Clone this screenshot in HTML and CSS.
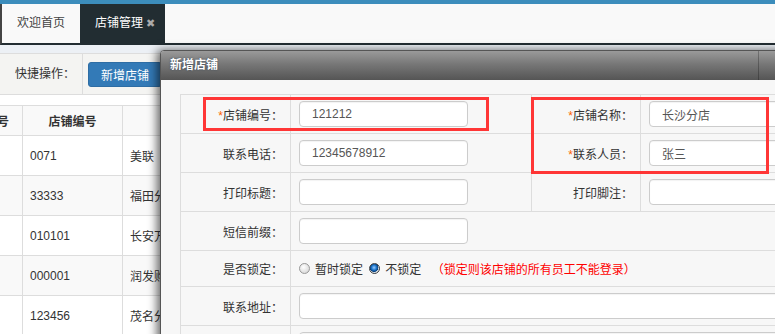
FILE: index.html
```html
<!DOCTYPE html>
<html lang="zh-CN">

<head>
    <meta charset="UTF-8">
    <meta name="viewport" content="width=device-width, initial-scale=1.0">
    <title>店铺管理</title>
    <link rel="stylesheet" href="styles.css">
</head>

<body>
    <div class="topbar"></div>
    <div class="tabs">
        <div class="tab">欢迎首页</div>
        <div class="tab active">店铺管理<span class="tab-close">✖</span></div>
    </div>

    <div class="content">
        <div class="panel">
            <div class="toolbar">
                <div class="toolbar-label">快捷操作：</div>
                <div class="toolbar-btns">
                    <button class="btn-primary">新增店铺</button>
                </div>
            </div>
            <div class="grid-wrap">
                <table class="grid">
                    <thead>
                        <tr>
                            <th class="col-no">序号</th>
                            <th class="col-code">店铺编号</th>
                            <th class="col-name">店铺名称</th>
                        </tr>
                    </thead>
                    <tbody>
                        <tr><td></td><td>0071</td><td>美联</td></tr>
                        <tr><td></td><td>33333</td><td>福田分店</td></tr>
                        <tr><td></td><td>010101</td><td>长安万达</td></tr>
                        <tr><td></td><td>000001</td><td>润发购物</td></tr>
                        <tr><td></td><td>123456</td><td>茂名分店</td></tr>
                    </tbody>
                </table>
            </div>
        </div>
    </div>

    <!-- 新增店铺 弹窗 -->
    <div class="dialog">
        <div class="dialog-head">
            <span class="dialog-title">新增店铺</span>
            <span class="dialog-tools"></span>
        </div>
        <div class="dialog-body">
            <table class="form">
                <colgroup>
                    <col class="c-label">
                    <col class="c-field">
                    <col class="c-label2">
                    <col class="c-field2">
                </colgroup>
                <tr>
                    <td class="label"><span class="req">*</span>店铺编号：</td>
                    <td><input class="input" type="text" value="121212"></td>
                    <td class="label"><span class="req">*</span>店铺名称：</td>
                    <td><input class="input" type="text" value="长沙分店"></td>
                </tr>
                <tr>
                    <td class="label">联系电话：</td>
                    <td><input class="input" type="text" value="12345678912"></td>
                    <td class="label"><span class="req">*</span>联系人员：</td>
                    <td><input class="input" type="text" value="张三"></td>
                </tr>
                <tr>
                    <td class="label">打印标题：</td>
                    <td><input class="input" type="text"></td>
                    <td class="label">打印脚注：</td>
                    <td><input class="input" type="text"></td>
                </tr>
                <tr>
                    <td class="label">短信前缀：</td>
                    <td colspan="3"><input class="input" type="text"></td>
                </tr>
                <tr class="row-radio">
                    <td class="label">是否锁定：</td>
                    <td colspan="3">
                        <label class="radio"><input type="radio" name="lock">暂时锁定</label>
                        <label class="radio"><input type="radio" name="lock" checked>不锁定</label>
                        <span class="tip">（锁定则该店铺的所有员工不能登录）</span>
                    </td>
                </tr>
                <tr>
                    <td class="label">联系地址：</td>
                    <td colspan="3"><input class="input input-wide" type="text"></td>
                </tr>
                <tr>
                    <td class="label"></td>
                    <td colspan="3"><textarea class="input input-wide area"></textarea></td>
                </tr>
            </table>
        </div>
    </div>

    <div class="mark mark-code"></div>
    <div class="mark mark-name"></div>
</body>

</html>
```

FILE: styles.css
```css
body {
    font-family: "Liberation Sans", "Noto Sans CJK SC", sans-serif;
    font-size: 12px;
    color: #333;
    margin: 0;
    padding: 0;
    width: 775px;
    height: 334px;
    overflow: hidden;
    position: relative;
    background-color: #fff;
}

.topbar {
    height: 4px;
    background-color: #3c8dbc;
}

.tabs {
    display: flex;
    height: 39px;
    background-color: #f9f9f9;
    border-left: 2px solid #444;
    border-bottom: 2px solid #222d32;
}

.tab {
    padding: 0 15px;
    line-height: 39px;
    font-size: 12px;
    color: #444;
}

.tab.active {
    background-color: #222d32;
    color: #fff;
    padding-right: 10px;
}

.tab-close {
    font-family: "DejaVu Sans", sans-serif;
    font-size: 11px;
    color: #aaa;
    margin-left: 3px;
}

.content {
    background-color: #ecf0f5;
    padding-top: 8px;
}

.panel {
    background-color: #fff;
    border-top: 1px solid #ddd;
}

.toolbar {
    display: flex;
    height: 40px;
    background-color: #f4f4f2;
    border-bottom: 1px solid #ddd;
}

.toolbar-label {
    width: 67px;
    padding-left: 15px;
    line-height: 40px;
    border-right: 1px solid #ddd;
}

.toolbar-btns {
    padding: 8px 5px;
}

.btn-primary {
    font-family: inherit;
    font-size: 12px;
    height: 25px;
    padding: 0 12px;
    background-color: #337ab7;
    color: #fff;
    border: 1px solid #2e6da4;
    border-radius: 3px;
}

.grid-wrap {
    padding-top: 10px;
}

.grid {
    border-collapse: collapse;
    margin-left: -29px;
}

.grid th,
.grid td {
    border: 1px solid #ddd;
    padding: 0 7px;
    text-align: left;
}

.grid th {
    height: 29px;
    background-color: #f9f9f9;
    text-align: center;
    font-weight: bold;
}

.grid td {
    height: 39px;
}

.grid tbody tr:nth-child(even) td {
    background-color: #f9f9f9;
}

.col-no {
    width: 36px;
}

.col-code {
    width: 85px;
}

.col-name {
    width: 120px;
}

/* dialog */
.dialog {
    position: absolute;
    left: 160px;
    top: 50px;
    width: 640px;
    height: 400px;
    border: 1px solid #555;
    border-radius: 4px 4px 0 0;
    background-color: #f7f7f7;
    box-shadow: -3px 0 10px rgba(0, 0, 0, 0.6);
}

.dialog-head {
    display: flex;
    height: 29px;
    background: linear-gradient(#9a9a9a, #777 45%, #555);
    border-radius: 3px 3px 0 0;
}

.dialog-title {
    flex: 1;
    padding-left: 9px;
    line-height: 29px;
    color: #fff;
    font-weight: bold;
    text-shadow: 0 0 2px #345;
}

.dialog-tools {
    width: 42px;
    border-left: 1px solid rgba(0, 0, 0, 0.25);
}

.dialog-body {
    padding: 14px 0 0 19px;
}

.form {
    border-collapse: collapse;
    width: 620px;
    table-layout: fixed;
}

.c-label {
    width: 110px;
}

.c-field {
    width: 241px;
}

.c-label2 {
    width: 109px;
}

.form td {
    border: 1px solid #ddd;
    padding: 6px 8px;
    height: 26px;
}

.form td.label {
    text-align: right;
    padding-right: 7px;
    white-space: nowrap;
}

.req {
    color: #f60;
}

.input {
    display: block;
    box-sizing: border-box;
    width: 169px;
    height: 26px;
    padding: 0 12px;
    font-family: inherit;
    font-size: 12px;
    color: #555;
    background-color: #fff;
    border: 1px solid #ccc;
    border-radius: 4px;
    box-shadow: inset 0 1px 1px rgba(0, 0, 0, 0.05);
}

.input-wide {
    width: 490px;
}

.area {
    height: 60px;
    resize: none;
}

.row-radio td {
    height: 23px;
}

.radio {
    display: inline-flex;
    align-items: center;
    margin-right: 3px;
}

.radio input {
    appearance: none;
    -webkit-appearance: none;
    width: 11px;
    height: 11px;
    margin: 0 5px 0 0;
    border: 1px solid #999;
    border-radius: 50%;
    background: radial-gradient(circle at 40% 35%, #fff, #ddd 70%, #bbb);
}

.radio input:checked {
    border-color: #444;
    background: radial-gradient(circle at 45% 40%, #9cf 0, #1a73c9 35%, #0b3f7a 55%, #cfd8e0 62%, #eee 100%);
}

.tip {
    color: #f00;
    margin-left: 4px;
}

/* annotation boxes */
.mark {
    position: absolute;
    border: 3px solid #ff3636;
    box-sizing: border-box;
}

.mark-code {
    left: 203px;
    top: 97px;
    width: 286px;
    height: 34px;
}

.mark-name {
    left: 531px;
    top: 97px;
    width: 238px;
    height: 77px;
}
```
